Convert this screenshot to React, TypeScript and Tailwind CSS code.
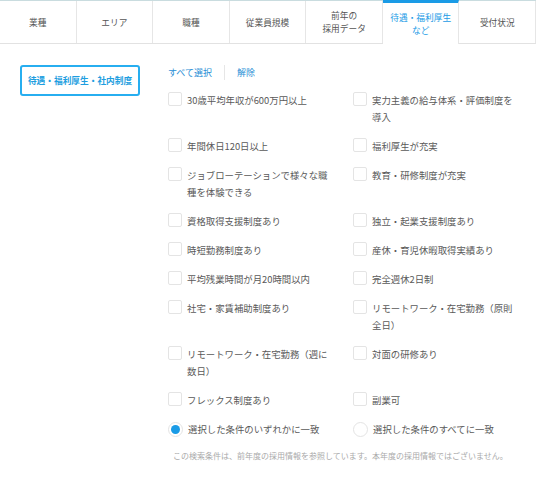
import React from 'react';

const TABS: { label: string[]; active?: boolean }[] = [
  { label: ['業種'] },
  { label: ['エリア'] },
  { label: ['職種'] },
  { label: ['従業員規模'] },
  { label: ['前年の', '採用データ'] },
  { label: ['待遇・福利厚生', 'など'], active: true },
  { label: ['受付状況'] },
];

// 左列, 右列 の順
const ROWS: [string, string][] = [
  ['30歳平均年収が600万円以上', '実力主義の給与体系・評価制度を導入'],
  ['年間休日120日以上', '福利厚生が充実'],
  ['ジョブローテーションで様々な職種を体験できる', '教育・研修制度が充実'],
  ['資格取得支援制度あり', '独立・起業支援制度あり'],
  ['時短勤務制度あり', '産休・育児休暇取得実績あり'],
  ['平均残業時間が月20時間以内', '完全週休2日制'],
  ['社宅・家賃補助制度あり', 'リモートワーク・在宅勤務（原則全日）'],
  ['リモートワーク・在宅勤務（週に数日）', '対面の研修あり'],
  ['フレックス制度あり', '副業可'],
];

function Check({ label }: { label: string }) {
  return (
    <label className="flex gap-[5px]">
      <span className="h-[14px] w-[14px] shrink-0 rounded-[2px] border border-[#e4e4e4] bg-white" />
      <span className="w-[146px] text-[9.4px] leading-[17px] text-[#595959]">{label}</span>
    </label>
  );
}

function Radio({ label, checked }: { label: string; checked?: boolean }) {
  return (
    <label className="flex items-center gap-[5px]">
      <span className="flex h-[15px] w-[15px] shrink-0 items-center justify-center rounded-full border border-[#e4e4e4] bg-white">
        {checked && <span className="h-[9px] w-[9px] rounded-full bg-[#1a9be6]" />}
      </span>
      <span className="text-[9.4px] leading-[17px] text-[#595959]">{label}</span>
    </label>
  );
}

export default function App() {
  return (
    <div className="h-[480px] w-[536px] bg-white font-['Noto_Sans_CJK_JP','Noto_Sans',sans-serif]">
      <div className="flex h-[44px] border-t border-b border-t-[#c9dcdf] border-b-[#e2e2e2]">
        {TABS.map((t, i) => (
          <div
            key={i}
            className={
              t.active
                ? 'relative z-10 -mt-px -mb-px flex h-[44px] flex-1 flex-col items-center justify-center border-t-[3px] border-r border-t-[#1a9be6] border-r-[#e6e6e6] bg-white text-[8.7px] leading-[13px] text-[#1a9be6]'
                : 'flex h-[42px] flex-1 flex-col items-center justify-center border-r border-[#e6e6e6] text-[8.7px] leading-[13px] text-[#555]'
            }
          >
            {t.label.map((l) => (
              <span key={l}>{l}</span>
            ))}
          </div>
        ))}
      </div>

      <div className="flex">
        <div className="w-[168px] shrink-0 pl-5 pt-[21px]">
          <button className="flex h-[31px] w-[120px] items-center justify-center rounded-[3px] border-2 border-[#27aef0] text-[8.7px] font-bold text-[#1e9ee0]">
            待遇・福利厚生・社内制度
          </button>
        </div>

        <div className="pt-[20px]">
          <div className="flex h-[17px] items-center text-[9px] leading-[17px] text-[#2a8fd6]">
            <span>すべて選択</span>
            <span className="mx-[12px] h-[15px] w-px bg-[#e6e6e6]" />
            <span>解除</span>
          </div>

          <div className="mt-[11px] grid grid-cols-[185px_1fr] gap-y-[12px]">
            {ROWS.map(([a, b]) => (
              <React.Fragment key={a}>
                <Check label={a} />
                <Check label={b} />
              </React.Fragment>
            ))}
            <Radio label="選択した条件のいずれかに一致" checked />
            <Radio label="選択した条件のすべてに一致" />
          </div>

          <p className="mt-[9px] pl-[5px] text-[8px] leading-[17px] text-[#aaa]">
            この検索条件は、前年度の採用情報を参照しています。本年度の採用情報ではございません。
          </p>
        </div>
      </div>
    </div>
  );
}
